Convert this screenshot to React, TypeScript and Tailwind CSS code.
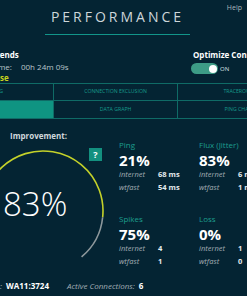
import React from 'react';

const tabs = [
  ['Routing', 'Connection Exclusion', 'Traceroute'],
  ['Overview', 'Data Graph', 'Ping Chart'],
];

const metrics = [
  { label: 'Ping', value: '21%', internet: '68 ms', wtfast: '54 ms' },
  { label: 'Flux (Jitter)', value: '83%', internet: '6 ms', wtfast: '1 ms' },
  { label: 'Spikes', value: '75%', internet: '4', wtfast: '1' },
  { label: 'Loss', value: '0%', internet: '1', wtfast: '0' },
];

const Gauge: React.FC<{ percent: string }> = ({ percent }) => (
  <div className="relative -ml-[22px] mt-[5px] w-[130px] h-[115px]">
    <svg width="130" height="115" viewBox="0 0 130 115" className="absolute inset-0">
      <path d="M 19.04 103.57 A 60 60 0 1 1 124.67 71.27" fill="none" stroke="#c4d22a" strokeWidth="1.6" />
      <path d="M 124.67 71.27 A 60 60 0 0 1 103.57 110.96" fill="none" stroke="#8e989c" strokeWidth="1.6" />
    </svg>
    <span className="absolute left-[25px] top-[41px] text-[33px] leading-[33px] font-light text-white">{percent}</span>
  </div>
);

export default function App() {
  return (
    <div
      className="w-[247px] h-[296px] overflow-hidden bg-[#042433] text-white"
      style={{ fontFamily: '"Open Sans", "Noto Sans", sans-serif' }}
    >
      {/* header */}
      <div className="flex h-[35px]">
        <div className="ml-[45px] w-[145px] shrink-0 border-b border-[#12958a] pt-[10px] text-center text-[14px] leading-[14px] tracking-[3px] text-[#cdd6da]">
          PERFORMANCE
        </div>
        <span className="ml-auto mr-[5px] mt-[3px] text-[7px] leading-[9px] text-[#a9b8bf]">Help</span>
      </div>

      {/* trends / optimize */}
      <div className="flex justify-between h-[48px] text-[8px] leading-[11.5px]">
        <div className="-ml-[8.5px] pt-[14px] whitespace-nowrap">
          <p className="font-bold text-white">Trends</p>
          <p className="text-[#b9c5ca]">
            Time:<span className="ml-[9px]">00h 24m 09s</span>
          </p>
          <p className="-ml-[4px] font-bold text-[#c6d21e]">Close</p>
        </div>
        <div className="w-[56px] shrink-0 pt-[14px] whitespace-nowrap">
          <p className="ml-[2px] font-bold text-white">Optimize Connection</p>
          <div className="mt-[2.5px] flex items-center">
            <div className="flex h-[11px] w-[27px] items-center rounded-full bg-[#3d9c86]">
              <span className="ml-auto mr-[1.5px] h-[8px] w-[8px] rounded-full bg-white" />
            </div>
            <span className="ml-[2px] text-[6px] leading-[6px] text-[#d8e2e5]">ON</span>
          </div>
        </div>
      </div>

      {/* tabs */}
      <div className="-ml-[70px] grid w-[372px] grid-cols-[124px_124px_124px] border-t border-[#0f6b66]">
        {tabs.map((row, r) =>
          row.map((t, c) => (
            <div
              key={t}
              className={`flex items-center justify-center border-r border-b border-[#0f6b66] text-[5.2px] uppercase whitespace-nowrap ${
                r === 0 ? 'h-[17px]' : 'h-[18px]'
              } ${r === 1 && c === 0 ? 'bg-[#0f9482] text-[#0f9482]' : 'text-[#179a8b]'}`}
            >
              {t}
            </div>
          ))
        )}
      </div>

      {/* main */}
      <div className="flex h-[161px]">
        <div className="relative w-[119px] shrink-0 pt-[11px]">
          <p className="ml-[10px] text-[8px] leading-[11px] font-bold text-[#d0d8dc]">Improvement:</p>
          <Gauge percent="83%" />
          <span className="absolute left-[89px] top-[29px] flex h-[13px] w-[13px] items-center justify-center bg-[#13907f] text-[9px] font-bold text-white">
            ?
          </span>
        </div>
        <div className="grid grid-cols-[80px_80px] gap-y-[19px] pt-[20px] content-start">
          {metrics.map(m => (
            <div key={m.label} className="whitespace-nowrap">
              <p className="text-[8px] leading-[11px] text-[#1d9e8d]">{m.label}</p>
              <p className="mt-[2px] text-[15px] leading-[16px] font-bold text-white">{m.value}</p>
              <div className="grid grid-cols-[39px_auto] text-[7.5px] leading-[13px]">
                <span className="italic text-[#a2aeb3]">internet</span>
                <span className="font-bold text-[#e6ecee]">{m.internet}</span>
                <span className="italic text-[#a2aeb3]">wtfast</span>
                <span className="font-bold text-[#e6ecee]">{m.wtfast}</span>
              </div>
            </div>
          ))}
        </div>
      </div>

      {/* footer */}
      <div className="-ml-[22px] flex whitespace-nowrap text-[8px] leading-[11px]">
        <span className="italic text-[#a2aeb3]">Server:</span>
        <span className="ml-[4px] font-bold text-white">WA11:3724</span>
        <span className="ml-[18px] italic text-[#a2aeb3]">Active Connections:</span>
        <span className="ml-[4px] font-bold text-white">6</span>
      </div>
    </div>
  );
}
